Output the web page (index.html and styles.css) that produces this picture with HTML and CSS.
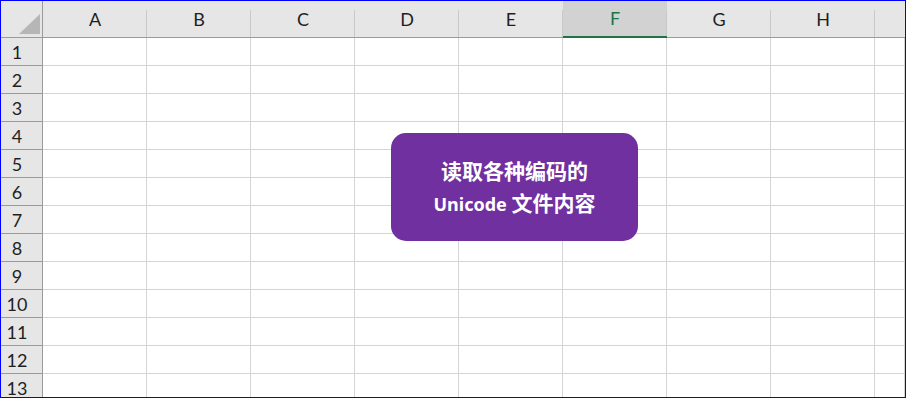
FILE: index.html
```html
<!DOCTYPE html>
<html lang="zh">
<head>
<meta charset="utf-8">
<link rel="stylesheet" href="styles.css">
</head>
<body>
<div class="frame">
  <div class="sheet">
    <div class="corner"><span class="tri"></span></div>
    <div class="colhead">A</div>
    <div class="colhead">B</div>
    <div class="colhead">C</div>
    <div class="colhead">D</div>
    <div class="colhead">E</div>
    <div class="colhead sel">F</div>
    <div class="colhead">G</div>
    <div class="colhead">H</div>
    <div class="colhead last"></div>
  </div>
  <div class="grid" id="grid"></div>
  <div class="callout"><div><span class="cjk">读取各种编码的</span><br><span class="lat">Unicode </span><span class="cjk">文件内容</span></div></div>
</div>
<script>
  var g = document.getElementById('grid');
  var html = '';
  for (var r = 1; r <= 13; r++) {
    html += '<div class="rowhead">' + r + '</div>';
    for (var c = 0; c < 9; c++) html += '<div class="cell"></div>';
  }
  g.innerHTML = html;
</script>
</body>
</html>
```
FILE: styles.css
```css
html, body { margin: 0; padding: 0; background: #fff; }
.frame {
  position: relative;
  width: 906px;
  height: 398px;
  box-sizing: border-box;
  border: 1px solid #0000ff;
  overflow: hidden;
  font-family: Lato, "Open Sans", sans-serif;
}
.sheet, .grid {
  display: grid;
  grid-template-columns: 42px repeat(8, 104px) 30px;
}
.sheet { height: 37px; background: #e6e6e6; }
.corner {
  position: relative;
  border-right: 1px solid #9b9b9b;
  border-bottom: 1px solid #9b9b9b;
  box-sizing: border-box;
}
.tri {
  position: absolute;
  right: 2px;
  bottom: 3px;
  width: 0; height: 0;
  border-left: 21px solid transparent;
  border-bottom: 20px solid #b6b6b6;
}
.colhead {
  position: relative;
  box-sizing: border-box;
  border-bottom: 1px solid #9b9b9b;
  font-size: 18px;
  color: #1f1f1f;
  text-align: center;
  line-height: 36px;
}
.colhead::after {
  content: "";
  position: absolute;
  right: 0; top: 9px; bottom: 0;
  width: 1px;
  background: #c8c8c8;
}
.colhead.last::after { display: none; }
.colhead.sel {
  background: #d2d2d2;
  color: #217346;
  border-bottom: 2px solid #217346;
  line-height: 35px;
}
.grid { grid-auto-rows: 28px; }
.rowhead {
  background: #e6e6e6;
  box-sizing: border-box;
  border-right: 1px solid #9b9b9b;
  border-bottom: 1px solid #9b9b9b;
  font-size: 18px;
  color: #1f1f1f;
  text-align: center;
  line-height: 28px;
  padding-right: 9px;
}
.cell {
  box-sizing: border-box;
  border-right: 1px solid #d4d4d4;
  border-bottom: 1px solid #d4d4d4;
}
.callout {
  position: absolute;
  left: 390px;
  top: 132px;
  width: 247px;
  height: 108px;
  box-sizing: border-box;
  border-radius: 15px;
  background: #7030a0;
  color: #fff;
  font-family: "Noto Sans", "Noto Sans CJK SC", sans-serif;
  font-weight: bold;
  font-size: 20px;
  line-height: 30px;
  text-align: center;
  display: flex;
  align-items: center;
  justify-content: center;
}
.callout .cjk { font-family: "Noto Sans CJK SC", sans-serif; font-size: 21px; }
.callout .lat { font-size: 18px; }
```
